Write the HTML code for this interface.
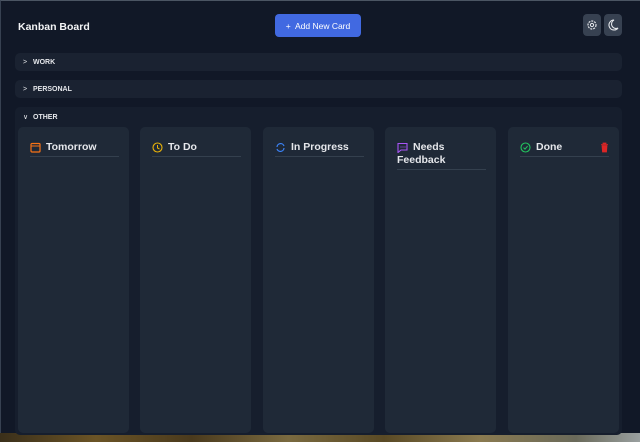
<!DOCTYPE html>
<html><head><style>
*{margin:0;padding:0;box-sizing:border-box}
body{width:640px;height:442px;background:#111827;font-family:"Liberation Sans",sans-serif;color:#f3f4f6;position:relative;overflow:hidden}
.frame{position:absolute;left:0;top:0;width:640px;height:434px;border-top:1px solid #4b5563;border-left:1px solid #374151}
.strip{position:absolute;left:0;top:433px;width:640px;height:9px;background:linear-gradient(90deg,#3a2f1a,#6b5426 15%,#4a3a1d 30%,#7a6a40 45%,#5a4a25 60%,#8a7a50 75%,#6a6a5a 90%,#9aa0a0)}
.title{position:absolute;left:18px;top:21px;font-size:10.5px;font-weight:bold}
.btn{position:absolute;left:275px;top:14px;width:86px;height:23px;background:#4169e1;border-radius:4px;font-size:8.5px;color:#fff;text-align:center;line-height:24px}
.ib{position:absolute;top:14px;width:18px;height:22px;background:#374151;border-radius:4px}
.sec{position:absolute;left:15px;width:607px;height:18px;background:#1a2231;border-radius:5px;font-size:7px;font-weight:bold;color:#e5e7eb;line-height:20px;padding-left:18px}
.chev{position:absolute;left:8px;top:0;font-size:7px;font-weight:normal}
.panel{position:absolute;left:15px;top:107px;width:607px;height:328px;background:#161e2d;border-radius:5px}
.col{position:absolute;top:127px;width:111px;height:306px;background:#1f2937;border-radius:5px}
.h{position:absolute;left:12px;top:14px;right:10px;font-size:10.5px;font-weight:bold;color:#e5e7eb;padding-left:16px;line-height:13px;padding-bottom:2px;border-bottom:1px solid #34404e}
.h svg{position:absolute;left:0;top:1px}
</style></head><body>
<div class="frame"></div>
<div class="strip"></div>
<div class="title">Kanban Board</div>
<div class="btn">+&nbsp; Add New Card</div>
<div class="ib" style="left:583px"><svg width="18" height="22" viewBox="0 0 18 22"><circle cx="9" cy="11" r="4" fill="none" stroke="#e5e7eb" stroke-width="1.2" stroke-dasharray="2 1"/><circle cx="9" cy="11" r="1.6" fill="none" stroke="#e5e7eb" stroke-width="1"/></svg></div>
<div class="ib" style="left:604px"><svg width="18" height="22" viewBox="0 0 18 22"><path d="M10 6a5 5 0 1 0 4 8a4 4 0 0 1-4-8z" fill="none" stroke="#e5e7eb" stroke-width="1.1"/></svg></div>
<div class="sec" style="top:53px"><span class="chev">&gt;</span>WORK</div>
<div class="sec" style="top:80px"><span class="chev">&gt;</span>PERSONAL</div>
<div class="panel"></div>
<div class="sec" style="top:108px;background:transparent"><span class="chev">&#8744;</span>OTHER</div>
<div class="col" style="left:18px"><div class="h"><svg width="11" height="11"><rect x="1" y="1.5" width="9" height="8.5" rx="1" fill="none" stroke="#f97316" stroke-width="1.2"/><line x1="1" y1="4" x2="10" y2="4" stroke="#f97316"/></svg>Tomorrow</div></div>
<div class="col" style="left:140px"><div class="h"><svg width="11" height="11"><circle cx="5.5" cy="5.5" r="4.5" fill="none" stroke="#eab308" stroke-width="1.1"/><path d="M5.5 3v3l2 1" fill="none" stroke="#eab308"/></svg>To Do</div></div>
<div class="col" style="left:263px"><div class="h"><svg width="11" height="11"><path d="M2 5a3.6 3.6 0 0 1 7-1M9 6a3.6 3.6 0 0 1-7 1" fill="none" stroke="#3b82f6" stroke-width="1.2"/></svg>In Progress</div></div>
<div class="col" style="left:385px"><div class="h"><svg width="11" height="11"><path d="M1 1.5h9v6.5H4l-3 2.5z" fill="none" stroke="#a855f7" stroke-width="1.1"/><path d="M3.5 5h1M5.5 5h1M7.5 5h1" stroke="#a855f7"/></svg>Needs<br><span style="margin-left:-16px">Feedback</span></div></div>
<div class="col" style="left:508px"><div class="h"><svg width="11" height="11"><circle cx="5.5" cy="5.5" r="4.5" fill="none" stroke="#22c55e" stroke-width="1.1"/><path d="M3.5 5.6l1.5 1.5 2.6-3" fill="none" stroke="#22c55e"/></svg>Done<svg width="9" height="11" style="left:auto;right:0"><path d="M1 2.5h7M3 2.5V1h3v1.5M2 3.5h5l-.5 6.5h-4z" fill="#dc2626" stroke="#dc2626" stroke-width=".8"/></svg></div></div>
</body></html>
